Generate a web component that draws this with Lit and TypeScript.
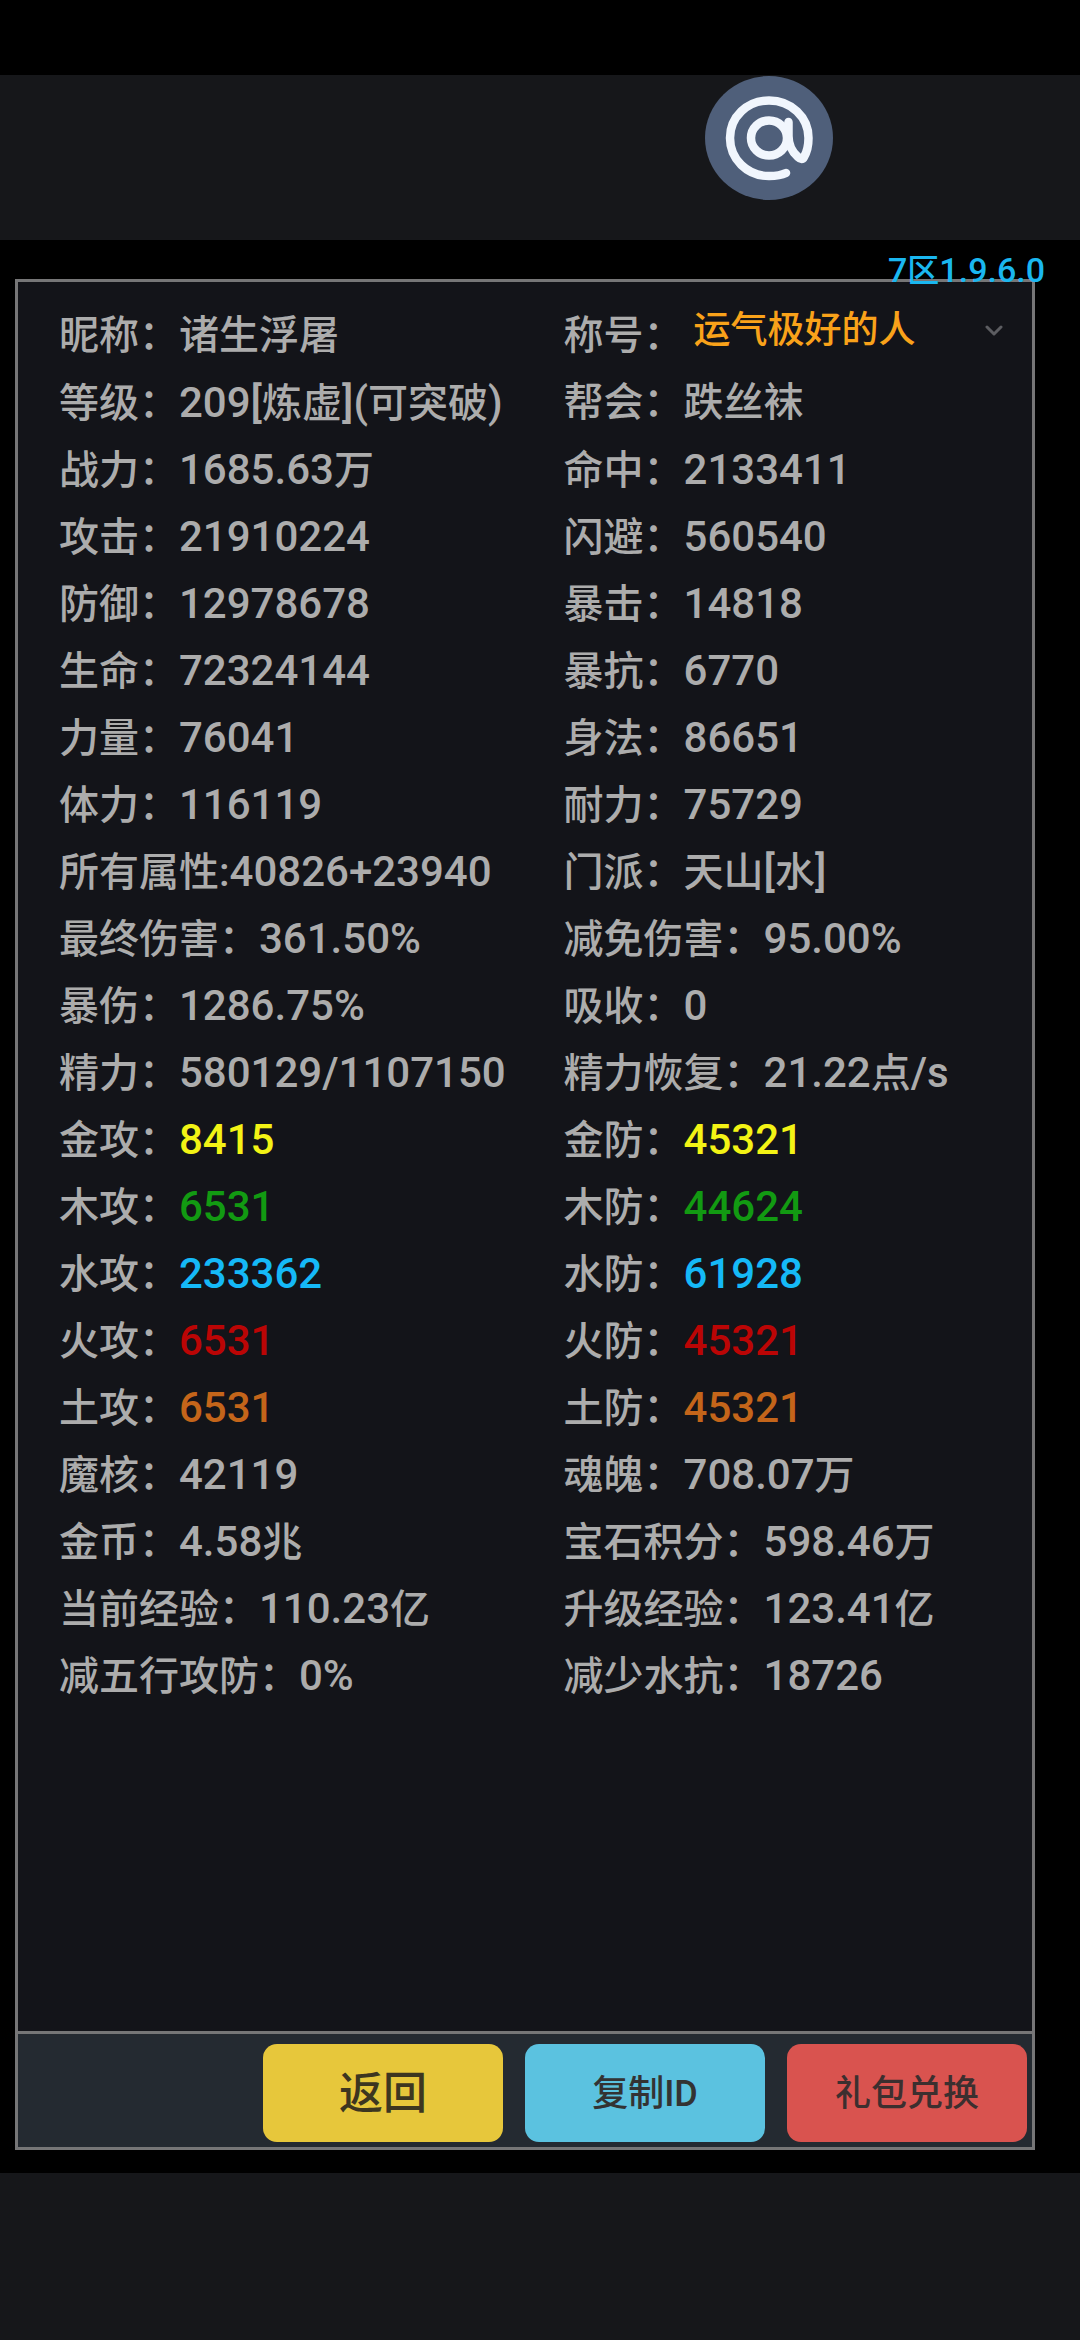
import { LitElement, html, css, svg } from "lit";
import { customElement, property } from "lit/decorators.js";

type Tone = "metal" | "wood" | "water" | "fire" | "earth";

interface Stat {
  label: string;
  value: string;
  tone?: Tone;
}

const STATS: Stat[] = [
  { label: "等级：", value: "209[炼虚](可突破)" },
  { label: "帮会：", value: "跌丝袜" },
  { label: "战力：", value: "1685.63万" },
  { label: "命中：", value: "2133411" },
  { label: "攻击：", value: "21910224" },
  { label: "闪避：", value: "560540" },
  { label: "防御：", value: "12978678" },
  { label: "暴击：", value: "14818" },
  { label: "生命：", value: "72324144" },
  { label: "暴抗：", value: "6770" },
  { label: "力量：", value: "76041" },
  { label: "身法：", value: "86651" },
  { label: "体力：", value: "116119" },
  { label: "耐力：", value: "75729" },
  { label: "所有属性:", value: "40826+23940" },
  { label: "门派：", value: "天山[水]" },
  { label: "最终伤害：", value: "361.50%" },
  { label: "减免伤害：", value: "95.00%" },
  { label: "暴伤：", value: "1286.75%" },
  { label: "吸收：", value: "0" },
  { label: "精力：", value: "580129/1107150" },
  { label: "精力恢复：", value: "21.22点/s" },
  { label: "金攻：", value: "8415", tone: "metal" },
  { label: "金防：", value: "45321", tone: "metal" },
  { label: "木攻：", value: "6531", tone: "wood" },
  { label: "木防：", value: "44624", tone: "wood" },
  { label: "水攻：", value: "233362", tone: "water" },
  { label: "水防：", value: "61928", tone: "water" },
  { label: "火攻：", value: "6531", tone: "fire" },
  { label: "火防：", value: "45321", tone: "fire" },
  { label: "土攻：", value: "6531", tone: "earth" },
  { label: "土防：", value: "45321", tone: "earth" },
  { label: "魔核：", value: "42119" },
  { label: "魂魄：", value: "708.07万" },
  { label: "金币：", value: "4.58兆" },
  { label: "宝石积分：", value: "598.46万" },
  { label: "当前经验：", value: "110.23亿" },
  { label: "升级经验：", value: "123.41亿" },
  { label: "减五行攻防：", value: "0%" },
  { label: "减少水抗：", value: "18726" },
];

/** Wraps the Latin and numeric runs of a value, which are set a little larger than the Han text. */
const runs = (text: string) =>
  text
    .split(/([\x20-\x7e]+)/)
    .filter(Boolean)
    .map((part) => (/^[\x20-\x7e]/.test(part) ? html`<span class="num">${part}</span>` : part));

@customElement("stat-item")
export class StatItem extends LitElement {
  @property({ attribute: false }) stat!: Stat;

  static styles = css`
    :host {
      display: block;
      white-space: nowrap;
    }
    .num {
      font-size: 42px;
    }
    .metal {
      color: #f3f315;
    }
    .wood {
      color: #129a12;
    }
    .water {
      color: #15b9f7;
    }
    .fire {
      color: #bb0505;
    }
    .earth {
      color: #c4651a;
    }
  `;

  render() {
    const { label, value, tone } = this.stat;
    return html`<span>${label}</span><span class=${tone ?? ""}>${runs(value)}</span>`;
  }
}

@customElement("app-root")
export class AppRoot extends LitElement {
  static styles = css`
    :host {
      display: flex;
      flex-direction: column;
      min-height: 100vh;
      background: #16171a;
      color: #acacac;
      font-family: Roboto, "Noto Sans CJK SC", sans-serif;
      font-size: 40px;
      font-weight: 500;
    }
    * {
      box-sizing: border-box;
    }
    .status {
      height: 75px;
      background: #000;
    }
    .top {
      position: relative;
      height: 165px;
    }
    .mention {
      position: absolute;
      top: 1px;
      left: 705px;
      padding: 0;
      border: 0;
      background: none;
    }
    .mention svg {
      display: block;
    }
    main {
      position: relative;
      flex: 1;
      display: flex;
      flex-direction: column;
      padding: 39px 45px 23px 15px;
      background: #000;
    }
    .version {
      position: absolute;
      top: 6px;
      right: 35px;
      font-size: 32px;
      line-height: 48px;
      color: #1ab7f0;
    }
    .version .num {
      font-size: 34px;
    }
    .panel {
      flex: 1;
      display: flex;
      flex-direction: column;
      border: 3px solid #767677;
      background: #131419;
    }
    .stats {
      flex: 1;
      display: grid;
      grid-template-columns: 14fr 13fr;
      align-content: start;
      padding: 20px 0 20px 41px;
      line-height: 67px;
    }
    .stats > * {
      height: 67px;
    }
    .title {
      display: flex;
      align-items: flex-start;
    }
    .picker {
      flex: 1;
      position: relative;
      display: flex;
      margin-right: 24px;
    }
    select {
      flex: 1;
      height: 57px;
      padding: 0 10px;
      border: 0;
      appearance: none;
      background: transparent;
      color: #f9a21a;
      font: inherit;
      font-size: 37px;
      line-height: 57px;
    }
    .chevron {
      position: absolute;
      top: 23px;
      right: 5px;
      pointer-events: none;
    }
    .actions {
      display: flex;
      justify-content: flex-end;
      gap: 22px;
      padding: 10px 5px 5px;
      border-top: 3px solid #767677;
      background: #242a31;
    }
    .actions button {
      width: 240px;
      height: 98px;
      padding: 0 0 6px;
      border: 0;
      border-radius: 14px;
      color: #333;
      font: inherit;
      font-size: 36px;
    }
    .actions .back {
      background: #e7c73b;
      color: #3d3620;
      font-size: 44px;
    }
    .actions .copy {
      background: #5bc2e0;
    }
    .actions .gift {
      background: #d9534f;
      color: #3c2f2f;
    }
    footer {
      height: 167px;
    }
  `;

  render() {
    return html`
      <div class="status"></div>
      <header class="top">
        <button class="mention" aria-label="@">
          ${svg`<svg width="128" height="124" viewBox="0 0 128 124" fill="none">
            <ellipse cx="64" cy="62" rx="64" ry="62" fill="#4f5f7a" />
            <g stroke="#f1f6fd" stroke-width="8.500" stroke-linecap="round" stroke-linejoin="round">
              <path d="M81 97C75 100 70 100 64 100C42 100 25 83 25 62S42 24.500 64 24.500S103.500 41 103.500 62C103.500 70 102 76 99 81Q97 85 93 81C86 75 83.500 69 83.500 60V46" />
              <ellipse cx="64" cy="62" rx="18" ry="17.500" />
            </g>
          </svg>`}
        </button>
      </header>
      <main>
        <section class="panel">
          <div class="stats">
            <stat-item .stat=${{ label: "昵称：", value: "诸生浮屠" }}></stat-item>
            <div class="title">
              <label for="title">称号：</label>
              <div class="picker">
                <select id="title">
                  <option>运气极好的人</option>
                </select>
                ${svg`<svg class="chevron" width="18" height="12" viewBox="0 0 18 12" fill="none">
                  <path d="M2 2L9 9L16 2" stroke="#5c5d61" stroke-width="3" stroke-linecap="round" stroke-linejoin="round" />
                </svg>`}
              </div>
            </div>
            ${STATS.map((stat) => html`<stat-item .stat=${stat}></stat-item>`)}
          </div>
          <div class="actions">
            <button class="back">返回</button>
            <button class="copy">复制ID</button>
            <button class="gift">礼包兑换</button>
          </div>
        </section>
        <div class="version">${runs("7区1.9.6.0")}</div>
      </main>
      <footer></footer>
    `;
  }
}
